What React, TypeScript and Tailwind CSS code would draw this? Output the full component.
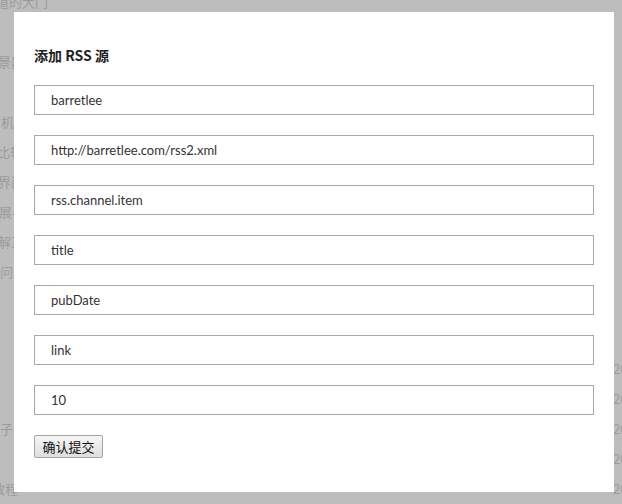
import React from "react";

const font = { fontFamily: '"Microsoft YaHei", "Noto Sans CJK SC", "Noto Sans", sans-serif' };
const inputFont = { fontFamily: 'Lato, "Noto Sans CJK SC", sans-serif' };

export default function App() {
  const upper: { text: string; ml: string }[] = [
    { text: "知道的大门", ml: "ml-[-17px]" },
    { text: "", ml: "" },
    { text: "景器", ml: "ml-[-2px]" },
    { text: "", ml: "" },
    { text: "机", ml: "ml-[1px]" },
    { text: "比较", ml: "ml-[-3px]" },
    { text: "界面", ml: "ml-[-2px]" },
    { text: "展与", ml: "ml-[-1px]" },
    { text: "解互", ml: "ml-[-2px]" },
    { text: "问", ml: "ml-[0px]" },
  ];
  const lower: { text: string; ml: string }[] = [
    { text: "", ml: "" },
    { text: "", ml: "" },
    { text: "子", ml: "ml-[0px]" },
    { text: "", ml: "" },
    { text: "教程", ml: "ml-[-8px]" },
  ];
  const fields = [
    "barretlee",
    "http://barretlee.com/rss2.xml",
    "rss.channel.item",
    "title",
    "pubDate",
    "link",
    "10",
  ];
  return (
    <div className="relative w-[622px] h-[504px] overflow-hidden bg-[#bdbdbd]" style={font}>
      <div className="flex flex-col text-[13px] text-[#9b9b9b] mt-[-13px]">
        {upper.map((r, i) => (
          <div key={i} className="h-[30px] flex items-center">
            <span className={`${r.ml} whitespace-nowrap`}>{r.text}</span>
          </div>
        ))}
        <div className="h-[67px]" />
        {lower.map((r, i) => (
          <div key={i} className="h-[30px] flex items-center justify-between">
            <span className={`${r.ml} whitespace-nowrap`}>{r.text}</span>
            <span className="w-[9px] overflow-hidden whitespace-nowrap">2016</span>
          </div>
        ))}
      </div>

      <div className="absolute left-[14px] top-[12px] w-[600px] h-[480px] bg-white px-5 pt-5">
        <h3 className="mt-[13px] mb-[20px] text-[14px] leading-[20px] font-bold text-[#222]">添加 RSS 源</h3>
        <div className="flex flex-col gap-5">
          {fields.map((f) => (
            <input
              key={f}
              readOnly
              value={f}
              className="w-[560px] h-[30px] border border-[#a9a9a9] pl-4 text-[13px] text-[#333] outline-none"
              style={inputFont}
            />
          ))}
        </div>
        <button
          className="mt-5 w-[69px] h-[23px] border border-[#a3a3a3] rounded-[2px] bg-gradient-to-b from-[#f6f6f6] to-[#dedede] text-[13px] leading-[21px] text-[#111] p-0"
          style={font}
        >
          确认提交
        </button>
      </div>
    </div>
  );
}
